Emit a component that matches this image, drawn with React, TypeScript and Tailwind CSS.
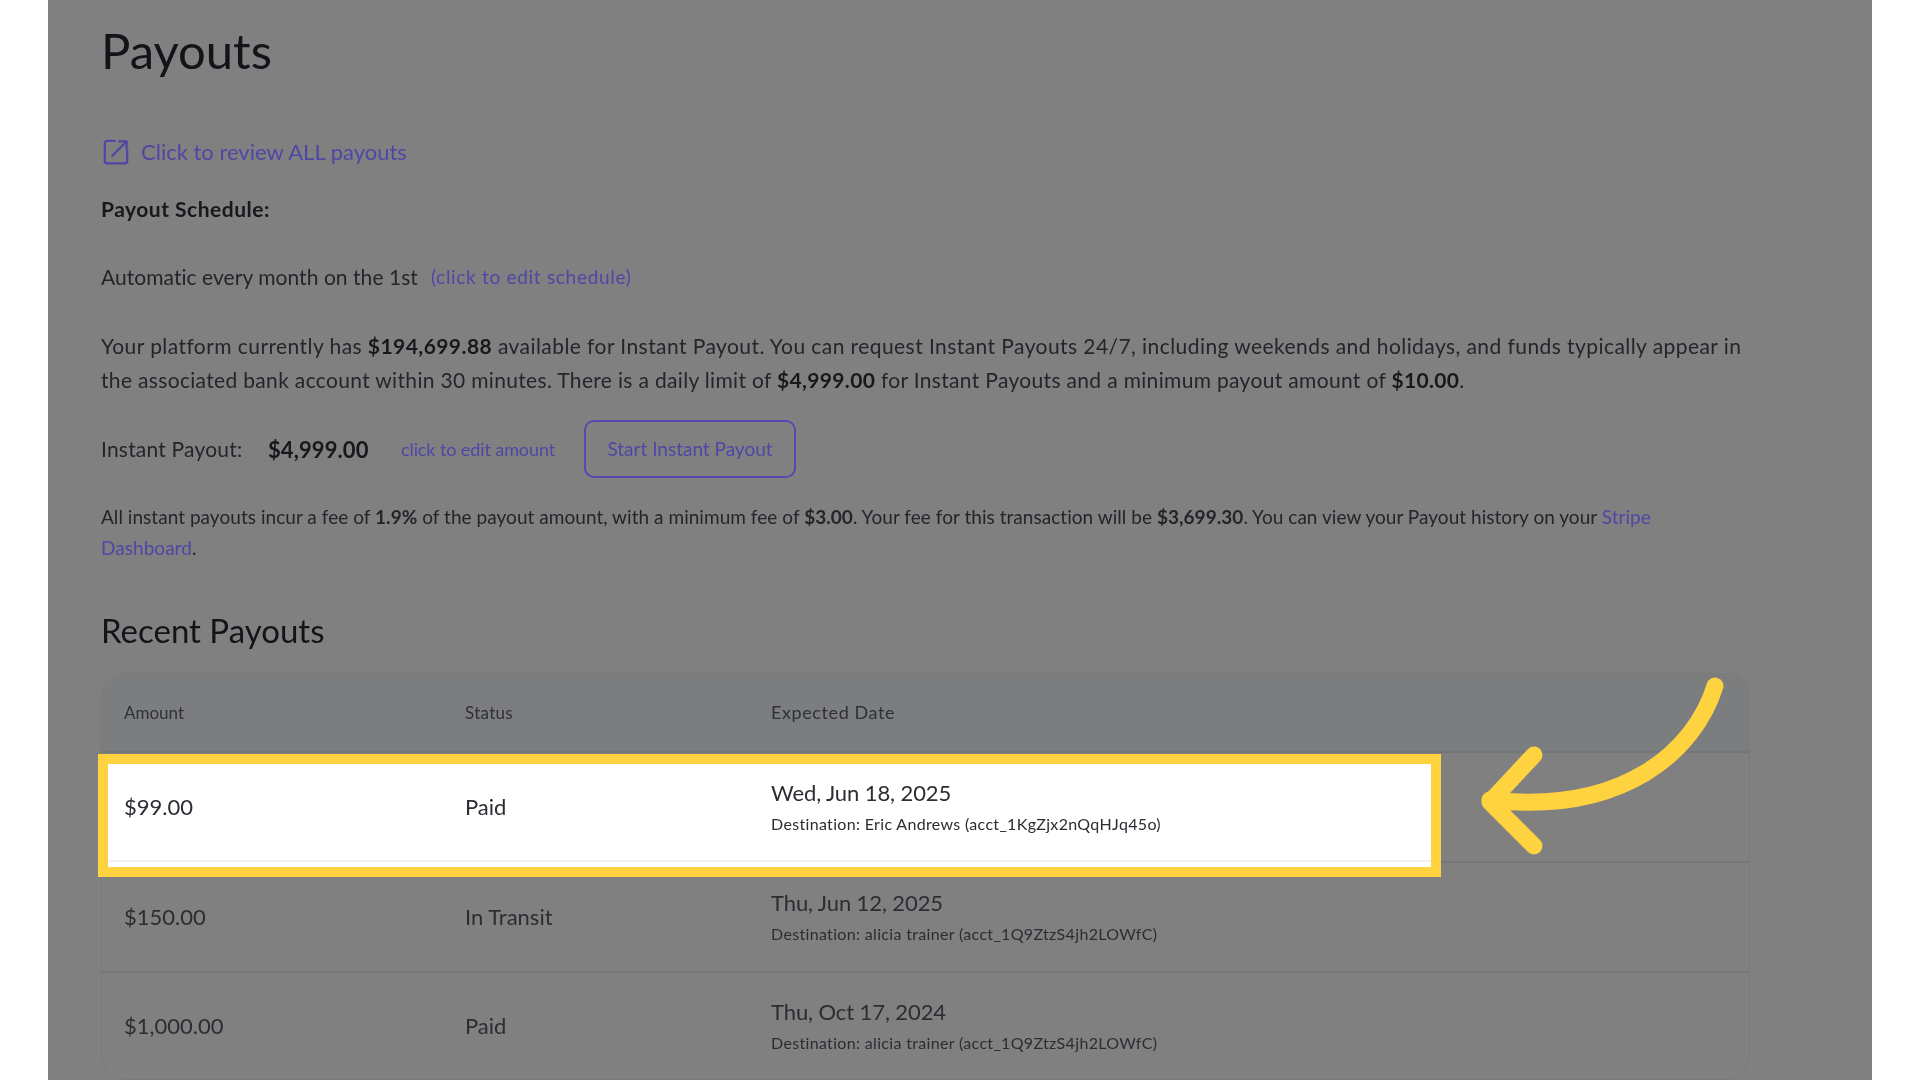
import React from "react";

const rows = [
  { amount: "$150.00", status: "In Transit", date: "Thu, Jun 12, 2025", dest: "Destination: alicia trainer (acct_1Q9ZtzS4jh2LOWfC)" },
  { amount: "$1,000.00", status: "Paid", date: "Thu, Oct 17, 2024", dest: "Destination: alicia trainer (acct_1Q9ZtzS4jh2LOWfC)" },
];

const RowCells = ({ amount, status, date, dest }: { amount: string; status: string; date: string; dest: string }) => (
  <>
    <div className="text-[22px] text-[#2b2d33] blur-[0.4px]">{amount}</div>
    <div className="text-[22px] text-[#2b2d33] blur-[0.4px]">{status}</div>
    <div className="blur-[0.4px]">
      <div className="text-[22px] leading-[30px] tracking-[-0.1px] text-[#2b2d33]">{date}</div>
      <div className="mt-[5px] text-[16px] leading-[22px] tracking-[0.33px] text-[#2b2d33]">{dest}</div>
    </div>
  </>
);

const App: React.FC = () => {
  return (
    <div className="h-[1080px] w-[1920px] overflow-hidden bg-white px-[48px] font-['Lato',sans-serif]">
      <div className="relative h-[1080px] bg-[#808080] pl-[53px] pr-[122px] text-[#17181c]">
        <div className="blur-[0.4px]">
          <h1 className="pt-[20px] text-[49px] leading-[60px] font-normal text-[#12141a]">Payouts</h1>

          <div className="mt-[55px] flex h-[32px] items-center text-[22px] text-[#4f46a5]">
            <svg className="mr-[10px] mt-[1px]" width="30" height="30" viewBox="0 0 24 24" fill="none" stroke="currentColor" strokeWidth="1.8" strokeLinecap="round" strokeLinejoin="round">
              <path d="M11 3H5a2 2 0 0 0-2 2v14a2 2 0 0 0 2 2h14a2 2 0 0 0 2-2v-8" />
              <path d="M9 15L20 4" />
              <path d="M14.5 3.5h6v6" />
            </svg>
            <span>Click to review ALL payouts</span>
          </div>

          <p className="mt-[27px] text-[21px] leading-[30px] font-bold tracking-[0.5px]">Payout Schedule:</p>

          <p className="mt-[38px] flex items-center text-[21px] leading-[30px] tracking-[0.05px] text-[#23252b]">
            Automatic every month on the 1st
            <span className="ml-[13px] text-[19px] tracking-[0.7px] text-[#4f46a5]">(click to edit schedule)</span>
          </p>

          <p className="mt-[37px] text-[21px] leading-[34px] text-[#23252b]">
            <span className="block tracking-[0.43px]">
              Your platform currently has <b className="text-[#17181c]">$194,699.88</b> available for Instant Payout. You can request Instant Payouts 24/7, including weekends and holidays, and funds typically appear in
            </span>
            <span className="block tracking-[0.33px]">
              the associated bank account within 30 minutes. There is a daily limit of <b className="text-[#17181c]">$4,999.00</b> for Instant Payouts and a minimum payout amount of <b className="text-[#17181c]">$10.00</b>.
            </span>
          </p>

          <div className="mt-[23px] flex items-center">
            <span className="w-[167px] text-[21px] tracking-[0.2px] text-[#23252b]">Instant Payout:</span>
            <span className="w-[133px] text-[22px] font-bold tracking-[0.1px]">$4,999.00</span>
            <span className="w-[183px] text-[18px] tracking-[-0.1px] text-[#4f46a5]">click to edit amount</span>
            <button className="h-[58px] w-[212px] rounded-[10px] border-2 border-[#5449b0] text-[19px] text-[#4f46a5]">Start Instant Payout</button>
          </div>

          <p className="mt-[23px] text-[19px] leading-[31px] tracking-[0.04px] text-[#23252b]">
            All instant payouts incur a fee of <b>1.9%</b> of the payout amount, with a minimum fee of <b>$3.00</b>. Your fee for this transaction will be <b>$3,699.30</b>. You can view your Payout history on your <span className="text-[#4f46a5]">Stripe</span>
            <br />
            <span className="text-[#4f46a5]">Dashboard</span>.
          </p>

          <h2 className="mt-[45px] text-[33px] leading-[44px] font-normal text-[#12141a]">Recent Payouts</h2>
        </div>

        <div className="mt-[21px] h-[407px] rounded-[24px] border border-[#797a7b]">
          <div className="grid h-[79px] grid-cols-[341px_306px_1fr] items-center rounded-t-[24px] border-b-2 border-[#747576] bg-[#7c7d7e] pl-[22px] text-[17px] text-[#2f3136]">
            <div className="blur-[0.4px]">Amount</div>
            <div className="tracking-[0.3px] blur-[0.4px]">Status</div>
            <div className="text-[18px] tracking-[0.6px] blur-[0.4px]">Expected Date</div>
          </div>

          <div className="relative h-[110px] border-b-2 border-[#747576]">
            <div className="absolute -left-[4px] top-[1px] h-[123px] w-[1343px] border-[10px] border-[#ffd23f] bg-white">
              <div className="grid h-[85px] grid-cols-[341px_306px_1fr] items-center pl-[16px]">
                <RowCells amount="$99.00" status="Paid" date="Wed, Jun 18, 2025" dest="Destination: Eric Andrews (acct_1KgZjx2nQqHJq45o)" />
              </div>
              <div className="mt-[11px] h-[2px] bg-[#eff1f1]" />
            </div>
          </div>

          {rows.map((r, i) => (
            <div key={i} className={`grid grid-cols-[341px_306px_1fr] items-center pl-[22px] ${i === 0 ? "h-[110px] border-b-2 border-[#747576] pb-[1px]" : "h-[105px]"}`}>
              <RowCells {...r} />
            </div>
          ))}
        </div>

        <svg className="absolute left-0 top-0" width="1824" height="1080" viewBox="48 0 1824 1080" fill="none" stroke="#ffd23f" strokeWidth="17" strokeLinecap="round" strokeLinejoin="round">
          <path d="M1715 686C1695 750 1625 815 1490 800" />
          <path d="M1534 755L1490 802L1534 846" />
        </svg>
      </div>
    </div>
  );
};

export default App;
